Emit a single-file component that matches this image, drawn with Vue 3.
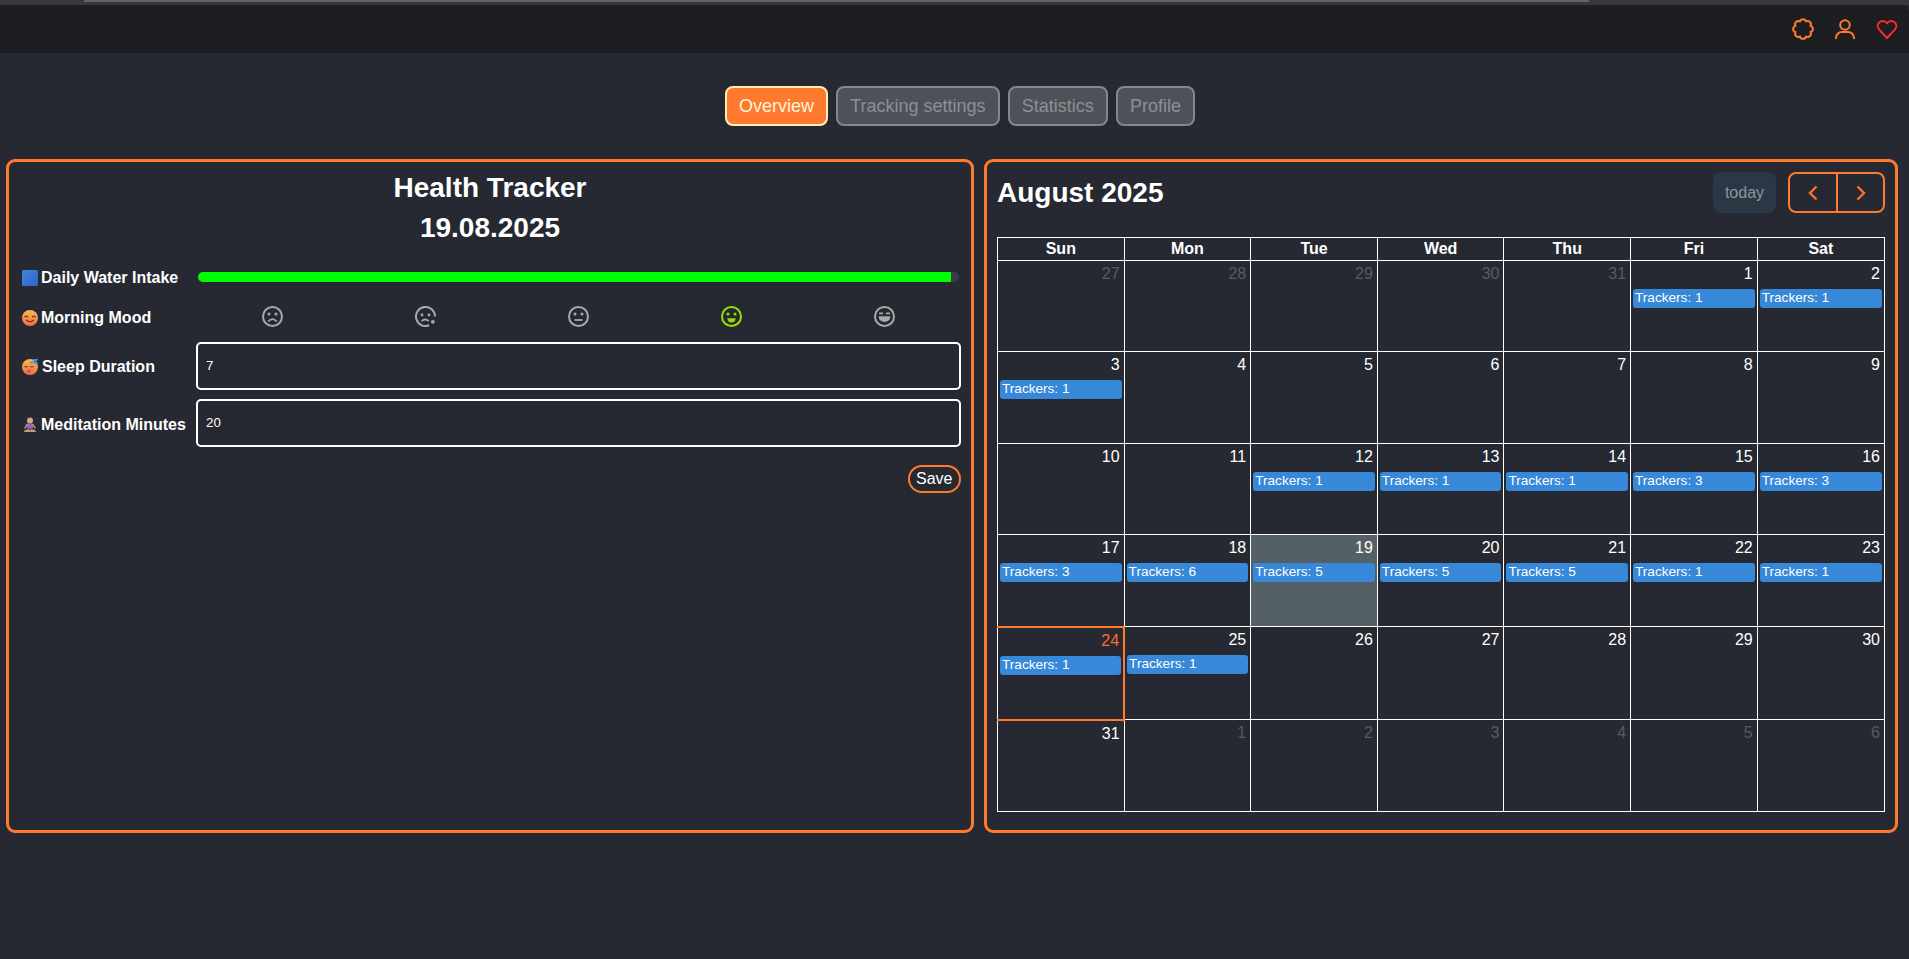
<script setup>
import { computed, ref } from 'vue';

const tabs = ['Overview', 'Tracking settings', 'Statistics', 'Profile'];
const activeTab = ref('Overview');

const waterPercent = ref(99);
const sleep = ref('7');
const meditation = ref('20');

const dayNames = ['Sun', 'Mon', 'Tue', 'Wed', 'Thu', 'Fri', 'Sat'];
const trackers = {
  1: 1, 2: 1, 3: 1, 12: 1, 13: 1, 14: 1, 15: 3, 16: 3, 17: 3,
  18: 6, 19: 5, 20: 5, 21: 5, 22: 1, 23: 1, 24: 1, 25: 1,
};

const weeks = computed(() => {
  const cells = [];
  for (let d = 27; d <= 31; d++) cells.push({ day: d, outside: true });
  for (let d = 1; d <= 31; d++) cells.push({ day: d, count: trackers[d] });
  for (let d = 1; d <= 6; d++) cells.push({ day: d, outside: true });

  const rows = [];
  for (let i = 0; i < cells.length; i += 7) rows.push(cells.slice(i, i + 7));
  return rows;
});

// scalloped outline of the settings icon
const gearPath = computed(() => {
  const bumps = 8;
  const points = [];
  for (let i = 0; i < bumps; i++) {
    const a = (Math.PI * 2 * i) / bumps + Math.PI / 8;
    points.push([10 + 8.2 * Math.cos(a), 10 + 8.2 * Math.sin(a)]);
  }
  let d = `M${points[0][0].toFixed(2)} ${points[0][1].toFixed(2)}`;
  for (let i = 1; i <= bumps; i++) {
    const p = points[i % bumps];
    d += ` A3.3 3.3 0 0 1 ${p[0].toFixed(2)} ${p[1].toFixed(2)}`;
  }
  return d + 'Z';
});
</script>

<template>
  <div class="page">
    <div class="window-strip"><div class="window-strip__thumb"></div></div>

    <header class="navbar">
      <svg class="nav-icon" viewBox="0 0 20 20" fill="none" stroke="#ff7a2e" stroke-width="2">
        <path :d="gearPath" />
      </svg>
      <svg class="nav-icon" viewBox="0 0 20 20" fill="none" stroke="#ff7a2e" stroke-width="2">
        <circle cx="10" cy="6" r="4.8" />
        <path d="M1 20v-1a6 6 0 0 1 6-6h6a6 6 0 0 1 6 6v1" />
      </svg>
      <svg class="nav-icon" viewBox="0 0 20 20" fill="none" stroke="#ff2a2a" stroke-width="2" stroke-linejoin="round">
        <path d="M10 19 2.2 10.6a5.2 5.2 0 0 1 0-7.2 4.900 4.900 0 0 1 7 0l.8.9.8-.9a4.900 4.900 0 0 1 7 0 5.2 5.2 0 0 1 0 7.2Z" />
      </svg>
    </header>

    <nav class="tabs">
      <button
        v-for="tab in tabs"
        :key="tab"
        type="button"
        class="tab"
        :class="{ 'tab--active': tab === activeTab }"
        @click="activeTab = tab"
      >
        {{ tab }}
      </button>
    </nav>

    <main class="panels">
      <section class="panel panel--tracker">
        <h1 class="tracker-title">Health Tracker</h1>
        <h1 class="tracker-title">19.08.2025</h1>

        <div class="tracker-form">
          <div class="row row--water">
            <label class="row__label">
              <svg class="emoji" viewBox="0 0 16 16">
                <defs>
                  <linearGradient id="blueSquare" x1="0" y1="0" x2="1" y2="1">
                    <stop offset="0" stop-color="#4386e0" />
                    <stop offset="1" stop-color="#2c62c4" />
                  </linearGradient>
                </defs>
                <rect width="16" height="16" rx="1.6" fill="url(#blueSquare)" />
              </svg>
              Daily Water Intake
            </label>
            <div class="water-bar">
              <div class="water-bar__fill" :style="{ width: waterPercent + '%' }"></div>
            </div>
          </div>

          <div class="row row--mood">
            <label class="row__label row__label--low">
              <svg class="emoji" viewBox="0 0 16 16">
                <defs>
                  <linearGradient id="faceWarm" x1="0" y1="0" x2="0" y2="1">
                    <stop offset="0" stop-color="#fdbb4c" />
                    <stop offset="1" stop-color="#ee6a45" />
                  </linearGradient>
                </defs>
                <circle cx="8" cy="8" r="8" fill="url(#faceWarm)" />
                <path d="M2.8 6.800q1.400-1.600 2.800 0M10.400 6.800q1.400-1.600 2.800 0M4.400 10.200q3.600 3 7.200 0" fill="none" stroke="#5a2c22" stroke-width="1.100" stroke-linecap="round" />
              </svg>
              Morning Mood
            </label>
            <div class="moods">
              <svg class="mood" viewBox="0 0 21 21">
                <circle cx="10.5" cy="10.5" r="9.5" fill="none" stroke="currentColor" stroke-width="2" />
                <circle cx="7" cy="8" r="1.5" fill="currentColor" />
                <circle cx="14" cy="8" r="1.5" fill="currentColor" />
                <path d="M6.200 15.400q4.300-4.600 8.600 0" fill="none" stroke="currentColor" stroke-width="1.800" />
              </svg>
              <svg class="mood" viewBox="0 0 21 21">
                <path d="M14.2 19.25A9.500 9.500 0 1 1 20 10.500" fill="none" stroke="currentColor" stroke-width="2" />
                <circle cx="7" cy="9" r="1.400" fill="currentColor" />
                <circle cx="14" cy="9" r="1.400" fill="currentColor" />
                <path d="M6.600 15.200q3.600-3.400 7.200 0" fill="none" stroke="currentColor" stroke-width="1.800" />
                <circle cx="17.800" cy="15.800" r="1.900" fill="currentColor" />
              </svg>
              <svg class="mood" viewBox="0 0 21 21">
                <circle cx="10.5" cy="10.5" r="9.5" fill="none" stroke="currentColor" stroke-width="2" />
                <circle cx="7" cy="8" r="1.5" fill="currentColor" />
                <circle cx="14" cy="8" r="1.5" fill="currentColor" />
                <path d="M6.500 14h8" fill="none" stroke="currentColor" stroke-width="1.800" />
              </svg>
              <svg class="mood mood--selected" viewBox="0 0 21 21">
                <circle cx="10.5" cy="10.5" r="9.5" fill="none" stroke="currentColor" stroke-width="2" />
                <circle cx="7" cy="8" r="1.5" fill="currentColor" />
                <circle cx="14" cy="8" r="1.5" fill="currentColor" />
                <path d="M6.300 12.200h8.400a4.200 4.200 0 0 1-8.400 0Z" fill="currentColor" />
              </svg>
              <svg class="mood" viewBox="0 0 21 21">
                <circle cx="10.5" cy="10.5" r="9.5" fill="none" stroke="currentColor" stroke-width="2" />
                <path d="M5 7.400h4M12 7.400h4" fill="none" stroke="currentColor" stroke-width="1.600" />
                <path d="M4.600 10.200h11.800a5.900 5.900 0 0 1-11.800 0Z" fill="currentColor" />
              </svg>
            </div>
          </div>

          <div class="row row--input">
            <label class="row__label row__label--spaced">
              <svg class="emoji" viewBox="0 0 16 16">
                <circle cx="8" cy="8" r="8" fill="url(#faceWarm)" />
                <path d="M2.800 7.600q1.400 1.300 2.800 0M8.400 7.600q1.400 1.300 2.800 0" fill="none" stroke="#5a2c22" stroke-width="1" stroke-linecap="round" />
                <ellipse cx="7" cy="12" rx="1.700" ry="1.500" fill="#d93a66" />
                <path d="M8 4.200 13.400 1.600M11.600 0.400h3.600L12.400 4h3.400" fill="none" stroke="#3f8ee8" stroke-width="1.300" />
              </svg>
              Sleep Duration
            </label>
            <input v-model="sleep" class="text-input" type="text" />
          </div>

          <div class="row row--input">
            <label class="row__label row__label--low">
              <svg class="emoji" viewBox="0 0 16 16">
                <circle cx="8" cy="3.400" r="3" fill="#cfa98c" />
                <rect x="5" y="6.200" width="6" height="5.600" rx="1.600" fill="#8e6bb0" />
                <path d="M5.400 6.800 2.600 11.600M10.600 6.800l2.800 4.800" stroke="#c49c80" stroke-width="1.300" fill="none" />
                <path d="M1.400 14.400q3.600-3 6.600-1.600q3-1.400 6.600 1.600q-3 1.200-6.600.4q-3.600.8-6.600-.4Z" fill="#c49c80" />
              </svg>
              Meditation Minutes
            </label>
            <input v-model="meditation" class="text-input" type="text" />
          </div>

          <div class="form-actions">
            <button type="button" class="save-btn">Save</button>
          </div>
        </div>
      </section>

      <section class="panel panel--calendar">
        <div class="cal-toolbar">
          <h2 class="cal-title">August 2025</h2>
          <div class="cal-controls">
            <button type="button" class="today-btn">today</button>
            <div class="cal-nav">
              <button type="button" class="cal-nav__btn cal-nav__btn--prev" aria-label="prev">
                <svg width="10" height="16" viewBox="0 0 10 16" fill="none" stroke="#ff6f2c" stroke-width="2.400"><path d="M8.500 1.500 2 8l6.500 6.500" /></svg>
              </button>
              <button type="button" class="cal-nav__btn" aria-label="next">
                <svg width="10" height="16" viewBox="0 0 10 16" fill="none" stroke="#ff6f2c" stroke-width="2.400"><path d="M1.500 1.500 8 8l-6.500 6.500" /></svg>
              </button>
            </div>
          </div>
        </div>

        <table class="cal-grid">
          <thead>
            <tr>
              <th v-for="name in dayNames" :key="name">{{ name }}</th>
            </tr>
          </thead>
          <tbody>
            <tr v-for="(week, w) in weeks" :key="w">
              <td
                v-for="cell in week"
                :key="cell.day + '-' + !!cell.outside"
                :class="{
                  'cell--outside': cell.outside,
                  'cell--today': !cell.outside && cell.day === 19,
                  'cell--picked': !cell.outside && cell.day === 24,
                }"
              >
                <div class="cell__day">{{ cell.day }}</div>
                <div v-if="cell.count" class="cell__event">Trackers: {{ cell.count }}</div>
              </td>
            </tr>
          </tbody>
        </table>
      </section>
    </main>
  </div>
</template>

<style scoped>
.page {
  min-height: 100vh;
  background: #262931;
  color: #fff;
  font-family: "Liberation Sans", Arial, sans-serif;
  font-size: 16px;
}

.window-strip {
  height: 5px;
  background: #383838;
  display: flex;
  padding: 0 320px 0 84px;
}

.window-strip__thumb {
  flex: 1;
  height: 2px;
  background: #636363;
}

.navbar {
  height: 48px;
  box-sizing: border-box;
  background: #1d1e22;
  border-top-right-radius: 8px;
  display: flex;
  justify-content: flex-end;
  align-items: center;
  gap: 22px;
  padding: 0 12px 0 0;
}

.nav-icon {
  width: 20px;
  height: 20px;
  overflow: visible;
}

.tabs {
  display: flex;
  justify-content: center;
  gap: 8px;
  padding-top: 33px;
  padding-left: 11px;
}

.tab {
  height: 40px;
  padding: 0 12.1px;
  font-family: inherit;
  font-size: 18px;
  color: #8c8f96;
  background: #4f5159;
  border: 2px solid #84878d;
  border-radius: 8px;
  cursor: pointer;
}

.tab--active {
  background: #ff7a2e;
  border-color: #ffefb5;
  color: #fff6d8;
}

.panels {
  display: flex;
  gap: 10px;
  padding: 33px 11px 0 6px;
}

.panel {
  height: 674px;
  box-sizing: border-box;
  border: 3px solid #ff7a2e;
  border-radius: 9px;
}

.panel--tracker {
  width: 968px;
  padding: 5.5px 10px 0;
}

.panel--calendar {
  flex: 1;
  padding: 10px;
}

.tracker-title {
  margin: 0;
  text-align: center;
  font-size: 28px;
  line-height: 40px;
  font-weight: 700;
}

.tracker-form {
  padding: 17.5px 0 0 3px;
}

.row {
  display: flex;
  align-items: center;
}

.row--water {
  height: 24px;
  margin-bottom: 15px;
}

.row--mood {
  height: 24px;
  margin-bottom: 14px;
}

.row--input {
  margin-bottom: 9.5px;
}

.row__label {
  width: 174px;
  flex: none;
  display: flex;
  align-items: center;
  gap: 3px;
  padding-top: 2px;
  font-weight: 700;
  white-space: nowrap;
}

.row__label--low {
  padding-top: 4px;
}

.row__label--spaced {
  gap: 4px;
}

.emoji {
  width: 16px;
  height: 16px;
  flex: none;
}

.water-bar {
  flex: 1;
  height: 10px;
  margin: 0 2px;
  background: #3a3d47;
  border-radius: 5px;
  overflow: hidden;
}

.water-bar__fill {
  height: 100%;
  background: #00ff00;
}

.moods {
  flex: 1;
  display: flex;
  justify-content: space-around;
}

.mood {
  width: 21px;
  height: 21px;
  color: #a9a9a9;
}

.mood--selected {
  color: #95e000;
}

.text-input {
  flex: 1;
  min-width: 0;
  height: 47.5px;
  box-sizing: border-box;
  padding: 0 8px;
  background: transparent;
  color: #fff;
  border: 2px solid #fff;
  border-radius: 5px;
  font-family: inherit;
  font-size: 13.333px;
}

.form-actions {
  display: flex;
  justify-content: flex-end;
  padding-top: 8.5px;
}

.save-btn {
  height: 28px;
  padding: 0 6.5px;
  background: transparent;
  color: #fff;
  border: 2px solid #ff7a2e;
  border-radius: 14px;
  font-family: inherit;
  font-size: 16px;
  cursor: pointer;
}

.cal-toolbar {
  display: flex;
  justify-content: space-between;
  align-items: center;
  margin-bottom: 24px;
}

.cal-title {
  margin: 0;
  font-size: 28px;
  font-weight: 700;
}

.cal-controls {
  display: flex;
  gap: 12px;
}

.today-btn {
  width: 63px;
  height: 41px;
  padding: 0;
  background: #2b3744;
  color: #8f949b;
  border: none;
  border-radius: 8px;
  font-family: inherit;
  font-size: 16px;
}

.cal-nav {
  display: flex;
  width: 97px;
}

.cal-nav__btn {
  flex: 1;
  height: 41px;
  padding: 0;
  background: transparent;
  border: 2px solid #ff7a2e;
  border-left: none;
  border-radius: 0 8px 8px 0;
  display: flex;
  align-items: center;
  justify-content: center;
}

.cal-nav__btn--prev {
  flex: none;
  width: 50px;
  border-left: 2px solid #ff7a2e;
  border-radius: 8px 0 0 8px;
}

.cal-grid {
  width: 100%;
  table-layout: fixed;
  border-collapse: collapse;
}

.cal-grid th,
.cal-grid td {
  box-sizing: border-box;
  border: 1px solid #fff;
  padding: 0;
}

.cal-grid th {
  height: 23px;
  font-size: 16px;
  font-weight: 700;
}

.cal-grid th:last-child {
  width: 127.3px;
}

.cal-grid td {
  vertical-align: top;
  height: 92px;
}

/* the source grid's rows are not all the same height */
.cal-grid tr:nth-child(odd) td {
  height: 91px;
}

.cal-grid tr:nth-child(5) td {
  height: 93px;
}

.cell__day {
  padding: 4px;
  text-align: right;
  line-height: 18.4px;
}

.cell__event {
  margin: 1.6px 2px 0;
  height: 19px;
  box-sizing: border-box;
  padding: 0 2px;
  background: #3788d8;
  border-radius: 3px;
  font-size: 13.6px;
  line-height: 18px;
  white-space: nowrap;
  overflow: hidden;
}

.cell--outside .cell__day {
  color: #595b60;
}

.cal-grid td.cell--today {
  background: #545f66;
}

.cal-grid td.cell--picked {
  border-top: 2px solid #ff7a2e;
  border-right: 2px solid #ff7a2e;
  border-bottom: 2px solid #ff7a2e;
}

.cell--picked .cell__day {
  color: #ff6b2c;
}
</style>

<style>
body {
  background: #262931;
}
</style>
